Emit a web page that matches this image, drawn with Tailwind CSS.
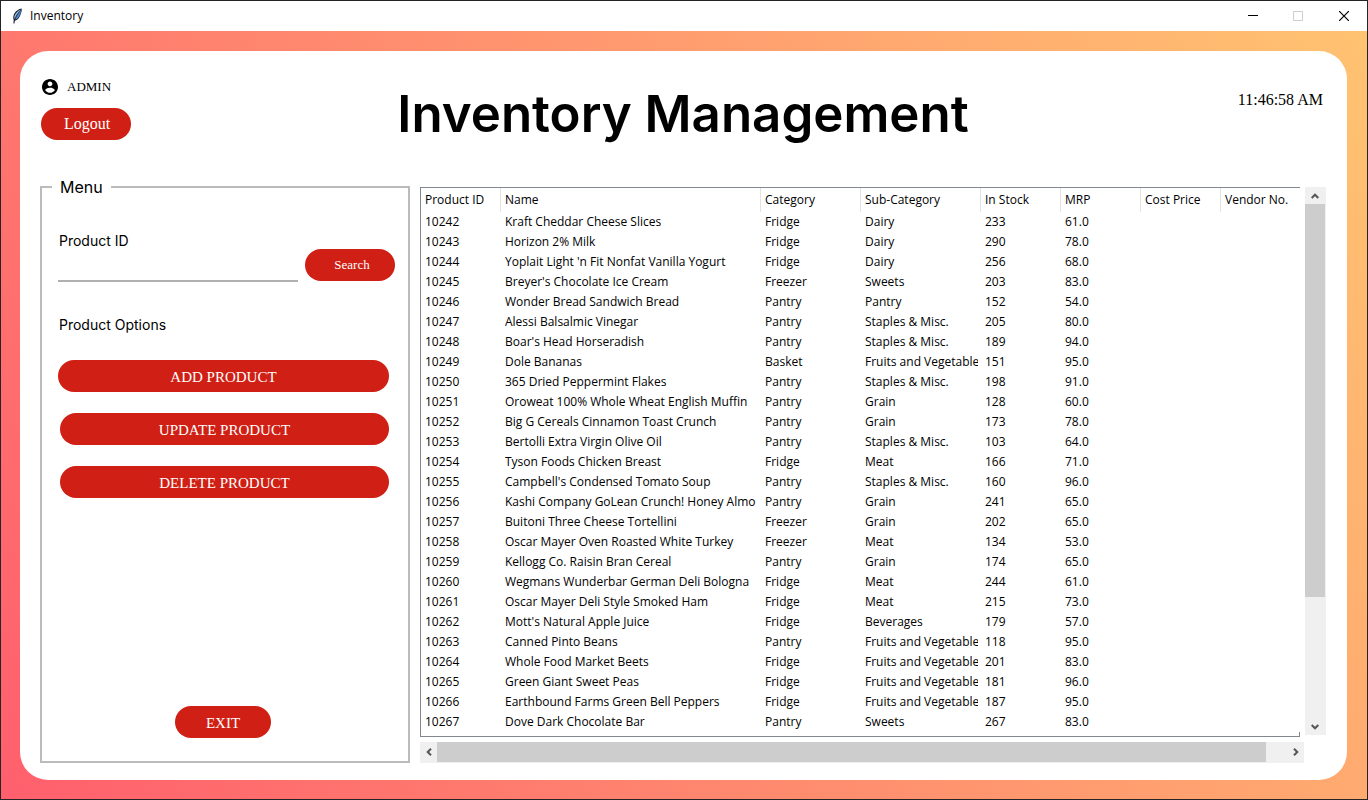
<!DOCTYPE html>
<html lang="en">
<head>
<meta charset="utf-8">
<title>Inventory</title>
<script src="https://cdn.jsdelivr.net/npm/@tailwindcss/browser@4"></script>
</head>
<body class="h-screen min-h-[640px] flex flex-col border border-[#242424] bg-white text-black overflow-hidden">
  <header class="h-[30px] shrink-0 flex items-center bg-white pl-2.5 font-['Open_Sans',sans-serif]">
    <svg class="w-3 h-4 shrink-0" viewBox="0 0 12 16" aria-hidden="true">
      <path d="M10.600.6C8 .8 4 3.400 2.700 7c-.7 2-.5 3.800 0 5l-.3 3.500h1l.6-3C6 12.600 8.500 10 9.400 7c.8-2.400 1.800-4.500 1.200-6.400z" fill="#1d2430"/>
      <path d="M9.800 1.400C7.300 2.200 4.500 5 3.700 7.500c-.5 1.400-.4 2.500-.1 3.400C4.600 8 6.800 4.500 9.800 1.400z" fill="#9cc6f0"/>
      <path d="M10.100 2C8 4.500 5.300 8 4.300 11.500 6.600 10.900 8.200 9 8.900 6.800 9.400 5.300 10.200 4 10.100 2z" fill="#4a86cc"/>
    </svg>
    <h2 class="ml-[7px] text-xs">Inventory</h2>
    <div class="ml-auto flex h-full">
      <button type="button" aria-label="Minimize" class="w-11 grid place-items-center"><svg width="10" height="10" viewBox="0 0 10 10"><path d="M0 4.500h10" stroke="#000"/></svg></button>
      <button type="button" aria-label="Maximize" disabled class="w-[46px] grid place-items-center"><svg width="10" height="10" viewBox="0 0 10 10"><path d="M.5.5h9v9h-9z" fill="none" stroke="#ccc"/></svg></button>
      <button type="button" aria-label="Close" class="w-[46px] grid place-items-center"><svg width="10" height="10" viewBox="0 0 10 10"><path d="M0 0l10 10M10 0L0 10" stroke="#000" stroke-width="1.200"/></svg></button>
    </div>
  </header>

  <main class="flex-1 min-h-0 flex p-5 pl-[19px] pb-[19px] bg-linear-[60deg] from-[#ff5f6d] to-[#ffc371]">
    <div class="flex-1 min-w-0 flex flex-col rounded-[28px] bg-white pl-5 pr-[21px] pb-[17px]">
      <div class="h-[124px] shrink-0 grid grid-cols-[1fr_auto_1fr] items-start">
        <div class="pt-[27px] pl-px">
          <div class="flex items-center gap-2 h-[18px] font-['Liberation_Serif',serif] text-[13px]">
            <svg class="w-[18px] h-[18px]" viewBox="0.75 0.75 22.500 22.500" aria-hidden="true"><path d="M12 2C6.480 2 2 6.480 2 12s4.480 10 10 10 10-4.480 10-10S17.520 2 12 2zm0 3c1.660 0 3 1.340 3 3s-1.340 3-3 3-3-1.340-3-3 1.340-3 3-3zm0 14.200c-2.500 0-4.710-1.280-6-3.220.03-1.990 4-3.080 6-3.080 1.990 0 5.970 1.090 6 3.080-1.290 1.940-3.500 3.220-6 3.220z"/></svg>
            <span>ADMIN</span>
          </div>
          <button type="button" class="mt-3 w-[90px] h-8 pl-0.5 rounded-full bg-[#d01f14] text-white font-['Liberation_Serif',serif] text-base">Logout</button>
        </div>
        <h1 class="pt-[33px] font-['Inter',sans-serif] font-semibold text-[51px] leading-[60px] whitespace-nowrap">Inventory Management</h1>
        <time class="pt-[37px] pr-[3px] text-right font-['Liberation_Serif',serif] text-base">11:46:58 AM</time>
      </div>

      <div class="flex-1 min-h-0 flex gap-2.5">
        <fieldset class="w-[370px] min-w-0 shrink-0 flex flex-col border-2 border-[#bbb] pl-4 pr-[13px] pb-[23px] font-['Inter',sans-serif]">
          <legend class="-ml-1.5 px-2 text-base">Menu</legend>
          <div class="mt-8 flex items-end">
            <div class="w-60 text-sm">
              <label for="pid" class="block pl-px">Product ID</label>
              <input id="pid" type="text" class="block w-full h-[31px] border-b-2 border-[#b0b0b0] outline-none">
            </div>
            <button type="button" class="ml-[7px] mb-px w-[90px] h-8 pl-1 rounded-full bg-[#d01f14] text-white font-['Liberation_Serif',serif] text-[13px]">Search</button>
          </div>
          <h3 class="mt-[33px] pl-px text-sm">Product Options</h3>
          <div class="mt-[25px] mr-1.5 flex flex-col gap-[21px] font-['Liberation_Serif',serif] text-[15px] text-white *:pt-0.5">
            <button type="button" class="h-8 rounded-full bg-[#d01f14]">ADD PRODUCT</button>
            <button type="button" class="ml-0.5 h-8 rounded-full bg-[#d01f14]">UPDATE PRODUCT</button>
            <button type="button" class="ml-0.5 h-8 rounded-full bg-[#d01f14]">DELETE PRODUCT</button>
          </div>
          <button type="button" class="mt-auto mr-[7px] self-center w-24 h-8 pt-0.5 rounded-full bg-[#d01f14] text-white font-['Liberation_Serif',serif] text-[15px]">EXIT</button>
        </fieldset>

        <div class="flex-1 min-w-0 pt-3 grid grid-cols-[1fr_21px] grid-rows-[1fr_21px]">
          <div class="relative mr-[5px] mb-[5px] min-h-0 overflow-hidden border-t border-l border-b border-[#828790]">
            <table class="w-[calc(100%+1px)] table-fixed border-separate border-spacing-0 text-left font-['Open_Sans',sans-serif] text-xs">
              <colgroup><col class="w-20"><col><col class="w-[100px]"><col class="w-[120px]"><col class="w-20"><col class="w-20"><col class="w-20"><col class="w-20"></colgroup>
              <thead>
                <tr class="h-6 *:p-0 *:pl-1 *:font-normal *:whitespace-nowrap *:border-r *:border-[#e2e2e2] *:last:border-r-0">
                  <th scope="col">Product ID</th><th scope="col">Name</th><th scope="col">Category</th><th scope="col">Sub-Category</th><th scope="col">In Stock</th><th scope="col">MRP</th><th scope="col">Cost Price</th><th scope="col">Vendor No.</th>
                </tr>
              </thead>
              <tbody id="rows"></tbody>
            </table>
            <span class="absolute bottom-0 right-0 w-px h-1 bg-[#828790]"></span>
          </div>
          <div class="mb-[7px] flex flex-col items-start bg-[#f0f0f0]">
            <button type="button" aria-label="Scroll up" class="w-5 h-[17px] grid place-items-center"><svg width="8" height="6" viewBox="0 0 8 6"><path d="M.7 5L4 1.700 7.300 5" fill="none" stroke="#555" stroke-width="2"/></svg></button>
            <div class="flex-1 min-h-0 w-full"><div class="w-5 h-[76.500%] bg-[#cdcdcd]"></div></div>
            <button type="button" aria-label="Scroll down" class="w-5 h-[17px] grid place-items-center"><svg width="8" height="6" viewBox="0 0 8 6"><path d="M.7 1L4 4.300 7.300 1" fill="none" stroke="#555" stroke-width="2"/></svg></button>
          </div>
          <div class="mr-px flex items-start bg-[#f0f0f0]">
            <button type="button" aria-label="Scroll left" class="w-[17px] h-5 grid place-items-center"><svg width="6" height="8" viewBox="0 0 6 8"><path d="M5 .7L1.700 4 5 7.300" fill="none" stroke="#555" stroke-width="2"/></svg></button>
            <div class="flex-1"><div class="w-[97.500%] h-5 bg-[#cdcdcd]"></div></div>
            <button type="button" aria-label="Scroll right" class="w-[17px] h-5 grid place-items-center"><svg width="6" height="8" viewBox="0 0 6 8"><path d="M1 .7L4.300 4 1 7.300" fill="none" stroke="#555" stroke-width="2"/></svg></button>
          </div>
        </div>
      </div>
    </div>
  </main>

<script>
const products = [
  ["Kraft Cheddar Cheese Slices","Fridge","Dairy",233,61],
  ["Horizon 2% Milk","Fridge","Dairy",290,78],
  ["Yoplait Light 'n Fit Nonfat Vanilla Yogurt","Fridge","Dairy",256,68],
  ["Breyer's Chocolate Ice Cream","Freezer","Sweets",203,83],
  ["Wonder Bread Sandwich Bread","Pantry","Pantry",152,54],
  ["Alessi Balsalmic Vinegar","Pantry","Staples & Misc.",205,80],
  ["Boar's Head Horseradish","Pantry","Staples & Misc.",189,94],
  ["Dole Bananas","Basket","Fruits and Vegetable",151,95],
  ["365 Dried Peppermint Flakes","Pantry","Staples & Misc.",198,91],
  ["Oroweat 100% Whole Wheat English Muffin","Pantry","Grain",128,60],
  ["Big G Cereals Cinnamon Toast Crunch","Pantry","Grain",173,78],
  ["Bertolli Extra Virgin Olive Oil","Pantry","Staples & Misc.",103,64],
  ["Tyson Foods Chicken Breast","Fridge","Meat",166,71],
  ["Campbell's Condensed Tomato Soup","Pantry","Staples & Misc.",160,96],
  ["Kashi Company GoLean Crunch! Honey Almo","Pantry","Grain",241,65],
  ["Buitoni Three Cheese Tortellini","Freezer","Grain",202,65],
  ["Oscar Mayer Oven Roasted White Turkey","Freezer","Meat",134,53],
  ["Kellogg Co. Raisin Bran Cereal","Pantry","Grain",174,65],
  ["Wegmans Wunderbar German Deli Bologna","Fridge","Meat",244,61],
  ["Oscar Mayer Deli Style Smoked Ham","Fridge","Meat",215,73],
  ["Mott's Natural Apple Juice","Fridge","Beverages",179,57],
  ["Canned Pinto Beans","Pantry","Fruits and Vegetable",118,95],
  ["Whole Food Market Beets","Fridge","Fruits and Vegetable",201,83],
  ["Green Giant Sweet Peas","Fridge","Fruits and Vegetable",181,96],
  ["Earthbound Farms Green Bell Peppers","Fridge","Fruits and Vegetable",187,95],
  ["Dove Dark Chocolate Bar","Pantry","Sweets",267,83]
];
const body = document.getElementById("rows");
products.forEach(([name, category, sub, stock, mrp], i) => {
  const tr = body.insertRow();
  tr.className = "h-5";
  for (const value of [10242 + i, name, category, sub, stock, mrp.toFixed(1), "", ""]) {
    const td = tr.insertCell();
    td.className = "p-0 pl-1";
    const text = document.createElement("div");
    text.className = "mr-[3px] h-5 leading-5 overflow-hidden whitespace-nowrap";
    text.textContent = value;
    td.append(text);
  }
});
</script>
</body>
</html>
